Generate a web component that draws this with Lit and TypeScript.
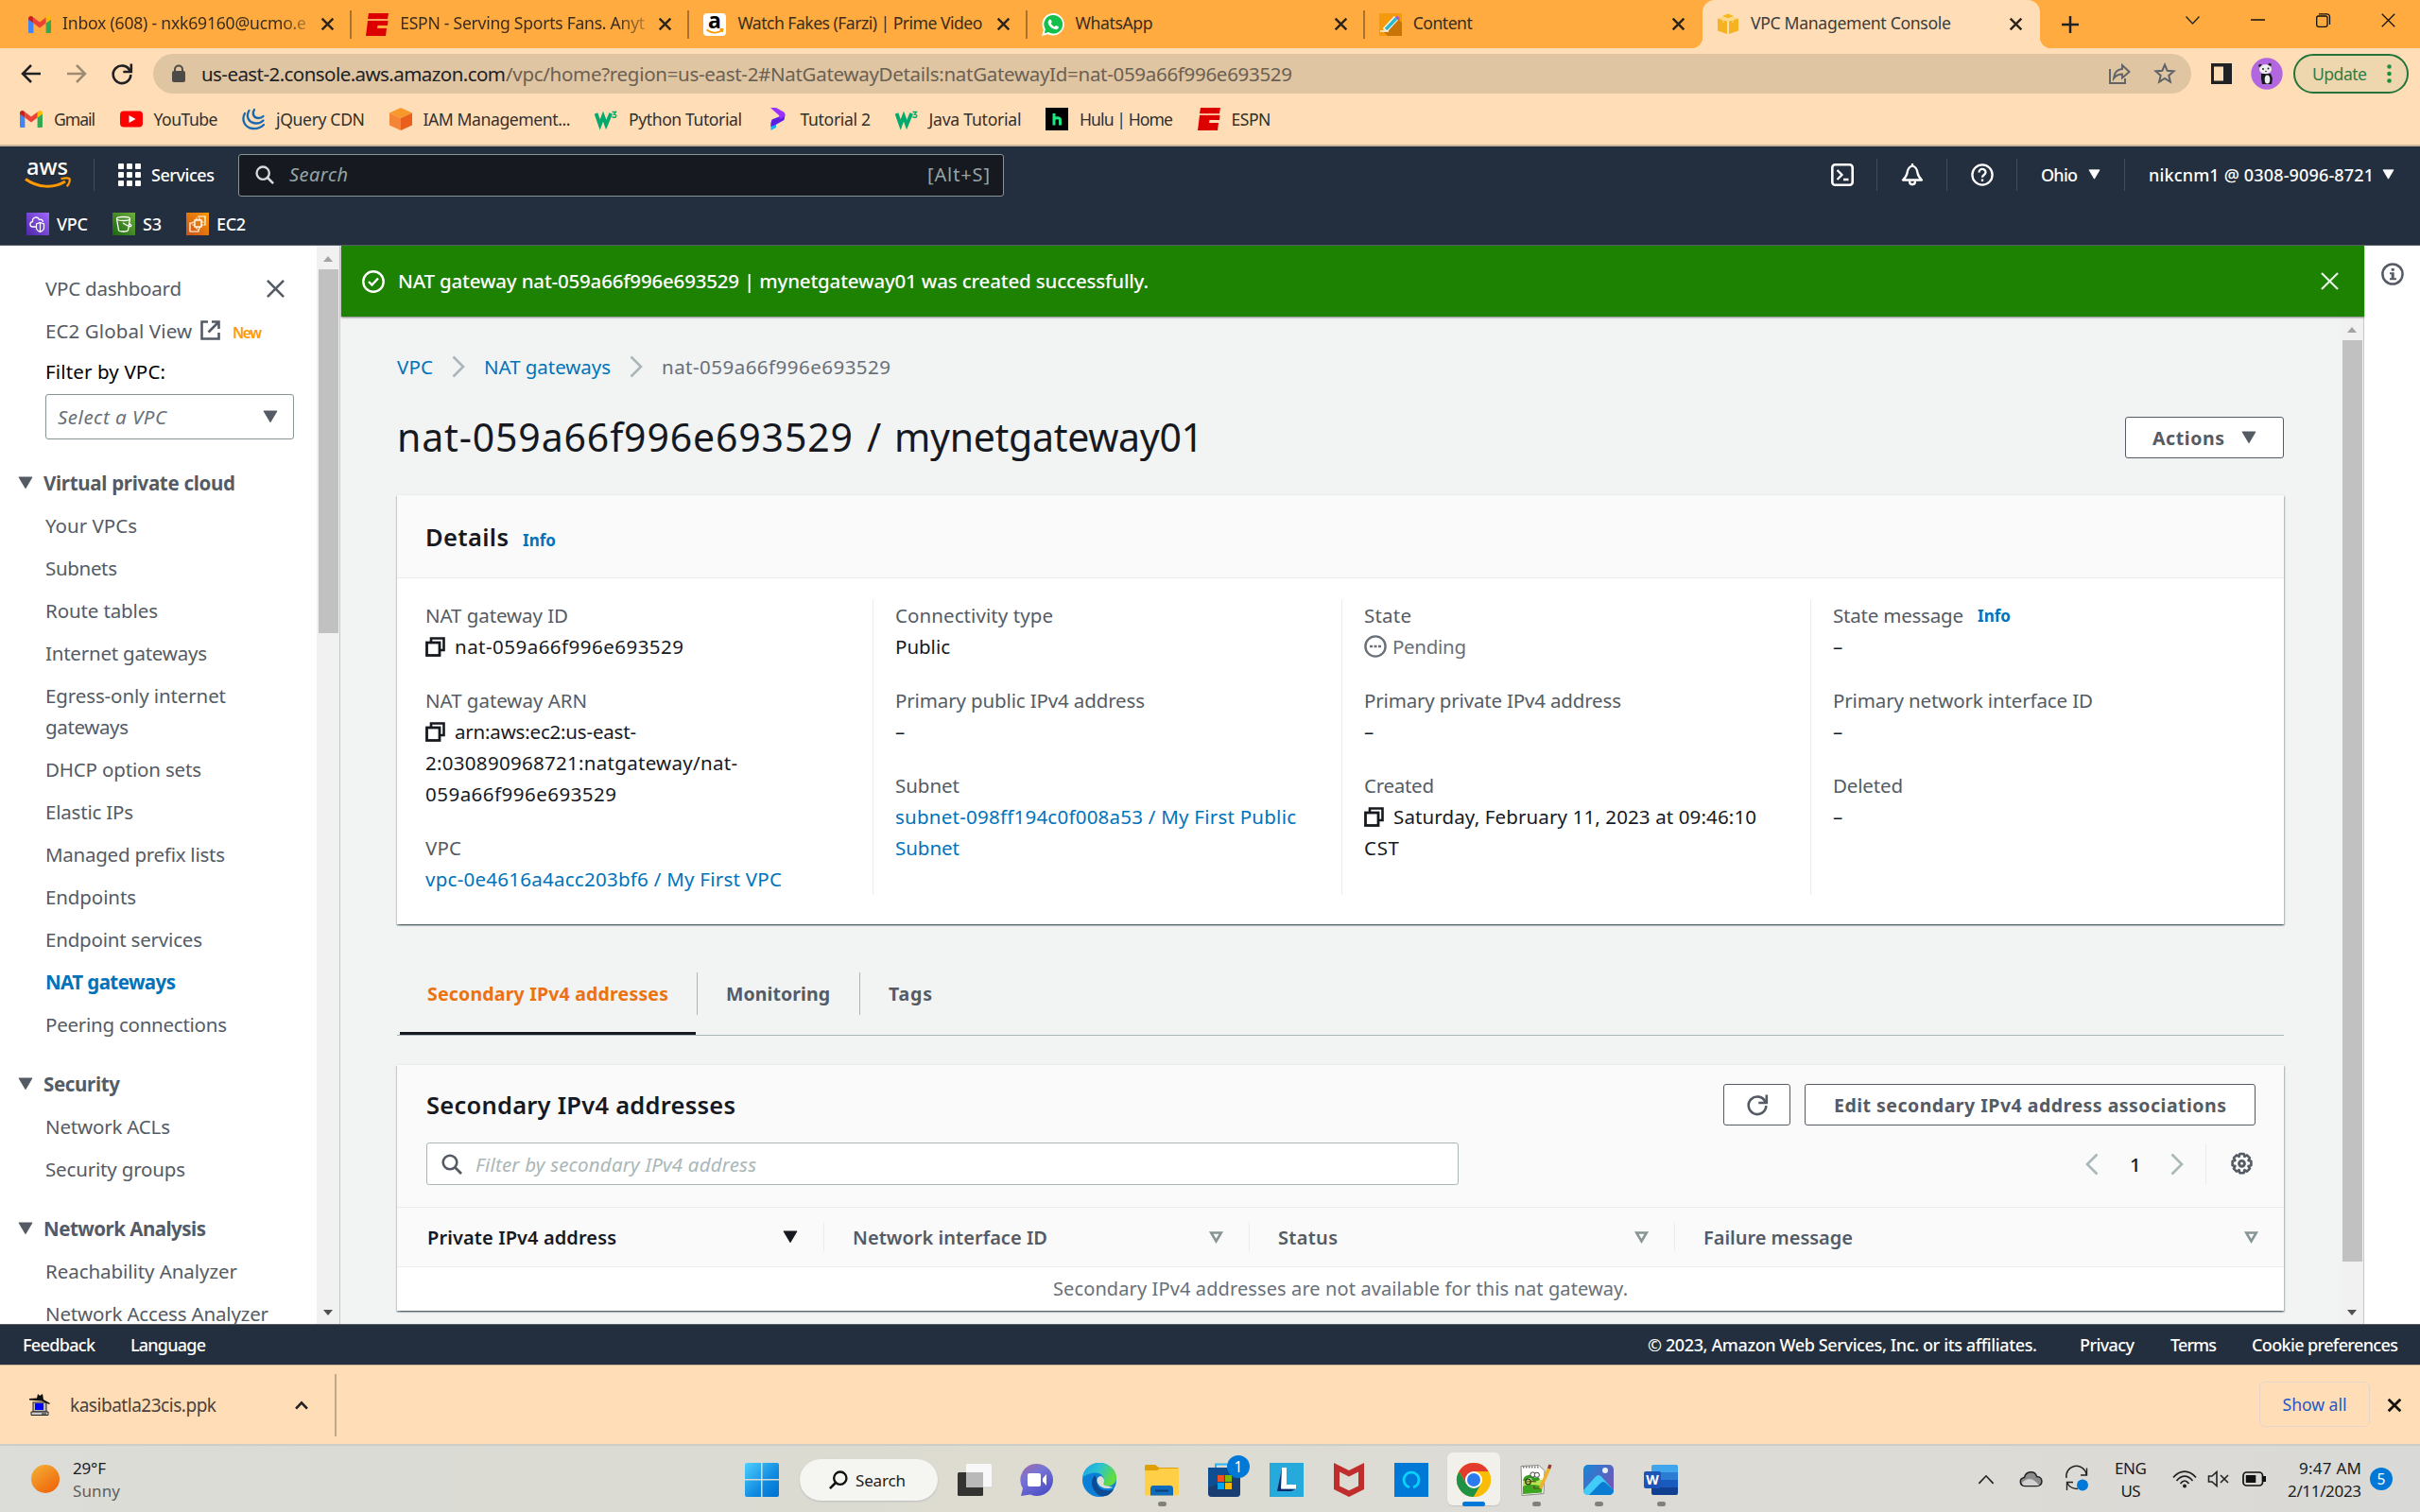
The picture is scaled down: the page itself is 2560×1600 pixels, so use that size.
import { LitElement, html, svg, css, nothing, TemplateResult } from "lit";
import { customElement } from "lit/decorators.js";

/* ---------- text fitted to a given advance width ---------- */
const fit = (text: string, w: number, cls = "") =>
  html`<span class="fit ${cls}" data-w=${w}>${text}</span>`;

/* ---------- icons ---------- */
const box = (w: number, h: number, vb: string, body: unknown, cls = "") =>
  html`<svg class="ic ${cls}" width=${w} height=${h} viewBox=${vb} fill="none">${body}</svg>`;

const gmail = () => box(24, 18, "0 0 24 18", svg`
  <path fill="#4285f4" d="M0 3v13.4c0 .9.7 1.6 1.6 1.6h3.8V7.6z"/>
  <path fill="#34a853" d="M18.6 18h3.8c.9 0 1.6-.7 1.6-1.6V3l-5.4 4.6z"/>
  <path fill="#fbbc04" d="M18.6 1.6v6L24 3.8V2.4c0-2-2.300-3.100-3.900-1.900z"/>
  <path fill="#ea4335" d="M5.400 7.600V1.600L12 6.500l6.600-4.900v6L12 12.500z"/>
  <path fill="#c5221f" d="M0 2.400v1.400l5.400 3.800v-6L3.900.5C2.300-.7 0 .4 0 2.400z"/>`);
const espn = () => box(24, 24, "0 0 24 24", svg`
  <path fill="#d00" d="M3 0h21l-1 6H2zM2 8h21.500L23 13h-10.500l-.5 3H22l-1 8H0z"/><path fill="#ff9a7a" d="M2 6.300h21v1.200H2z"/>`);
const amazonFav = () => box(24, 24, "0 0 24 24", svg`
  <rect width="24" height="24" rx="4" fill="#fff"/>
  <text x="12" y="15.500" text-anchor="middle" class="svgb" font-size="23" fill="#000">a</text>
  <path d="M3.500 17.500c5 4 12 4 16.500.5M17.500 17h3l-.6 3" stroke="#f90" stroke-width="1.800"/>`);
const whatsapp = () => box(24, 24, "0 0 24 24", svg`
  <path fill="#fff" d="M12.200 0a11.800 11.800 0 0 0-10.300 17.500L0 24l6.600-1.700A11.800 11.800 0 1 0 12.200 0z"/>
  <path fill="#12c04c" d="M12.200 2a9.800 9.800 0 0 0-8.300 15l-1.100 4.200 4.300-1.100A9.800 9.800 0 1 0 12.200 2z"/>
  <path fill="#fff" d="M8.500 6.500c.6-.2 1-.1 1.300.5l.9 2c.1.400 0 .7-.9 1.700.9 1.700 2.200 2.800 4 3.500.9-1.100 1.100-1.400 1.500-1.200l2.200 1c.5.300.5.600.2 1.400-.6 1.400-2.200 2-3.600 1.700-4-.9-7-4-7.400-7-.1-1.400.8-3.200 1.800-3.600z"/>`);
const pencil = () => box(24, 24, "0 0 24 24", svg`
  <rect width="24" height="24" fill="#f59a0c"/><path fill="#c97505" d="M5 20 20 6l4 4v14H9z"/>
  <path d="M1 19h9" stroke="#fff" stroke-width="1.300"/>
  <path d="M6 18 18 5" stroke="#fff" stroke-width="6"/><path d="M7 17 18 5.500" stroke="#2bb7c8" stroke-width="3.500"/>
  <path d="m17 4.500 2-2 3 3-2 2z" fill="#a35bd0"/><path d="m4 20 1-4 3 3z" fill="#fbe6b0"/>`);
const cube = () => box(24, 24, "0 0 24 24", svg`
  <path fill="#f8b91c" d="m6 3 6-2.500L18 3l-6 2.500z"/>
  <path fill="#f5b223" d="M1 5.500 11 8v14L1 18.500zM23 5.500 13 8v14l10-3.500z"/>
  <path fill="#fbd98a" d="m1 5.500 5-2 6 2.500 6-2.500 5 2L12 9z"/><path d="M7 7v3M17 7v3" stroke="#fbd98a"/>`);
const youtube = () => box(24, 24, "0 0 24 24", svg`
  <rect y="3.500" width="24" height="17" rx="4" fill="#f00"/><path fill="#fff" d="m9.500 8 7 4-7 4z"/>`);
const jquery = () => box(24, 24, "0 0 24 24", svg`<g stroke="#1669b0" stroke-width="2.300" stroke-linecap="round">
  <path d="M3 6c-4 7 0 15 8 16 5 .6 9-1 12-4"/><path d="M7.500 3c-4 7 0 13 7 13.500 3.500.2 6-1 8-3"/><path d="M13 2c-3 5 0 9 4.500 9 2 0 3.500-.6 5-2"/></g>`);
const iam = () => box(24, 24, "0 0 24 24", svg`
  <path fill="#f8982a" d="M12 0 24 5.500 12 11 0 5.500z"/><path fill="#f58536" d="M0 5.500 12 11v13L0 18.500z"/><path fill="#e8601c" d="M24 5.500 12 11v13l12-5.500z"/>`);
const w3 = () => box(24, 24, "0 0 24 24", svg`
  <path d="m1.500 6 4.200 12 3.300-9 3.200 9 5-12" stroke="#04aa6d" stroke-width="3.800"/>
  <path d="M18.500 4.500h4L20.500 7c3-.2 3 3.500 0 3.300-.9 0-1.600-.4-2-1" stroke="#04aa6d" stroke-width="1.400"/>`);
const pgeek = () => box(24, 24, "0 0 24 24", svg`
  <path fill="#17b0f5" d="M4.500 15.500 10 13v8l-5.500 3z"/><path fill="#5a1fe0" d="m4.500 16.500 1-4 9-3.500 5-2-1 6-9 5-5 2z"/><path fill="#9b30ff" d="M4 0h6l8 4.500c1.500 1 1.500 2.500 1.300 4.500L14 12l-1-4z"/>`);
const hulu = () => box(24, 24, "0 0 24 24", svg`<rect width="24" height="24" fill="#000"/>
  <path d="M9 6v12.500M9 13c0-3 6.500-3 6.500 0v5.500" stroke="#1ce783" stroke-width="3"/>`);

const x = (s: number, sw: number, col: string) =>
  box(s, s, "0 0 20 20", svg`<path d="M1 1 19 19M19 1 1 19" stroke=${col} stroke-width=${(sw * 20) / s}/>`);
const back = (fwd = false) => box(24, 24, "0 0 24 24",
  svg`<g transform=${fwd ? "matrix(-1 0 0 1 24 0)" : ""} stroke=${fwd ? "#9c8a73" : "#202124"} stroke-width="2.500"><path d="M22 12H3M12 3l-9 9 9 9"/></g>`);
const reload = (col: string, s = 24) => box(s, s, "0 0 24 24", svg`
  <path d="M20.500 9A9.300 9.300 0 1 0 21.300 13" stroke=${col} stroke-width="2.600"/><path d="M21.800 1.500V10h-8.500" stroke=${col} stroke-width="2.600"/>`);
const lock = () => box(16, 20, "0 0 16 20", svg`<rect x="1" y="7" width="14" height="12" rx="2" fill="#4d4b47"/><path d="M4 8V5.500a4 4 0 0 1 8 0V8" stroke="#4d4b47" stroke-width="2"/>`);
const shareIc = () => box(24, 24, "0 0 24 24", svg`<g stroke="#5f6368" stroke-width="1.900"><path d="M2 7v15h16v-5"/><path d="M15 3v4C9 7.500 6.500 11 6 17c2.500-3.500 5-4.500 9-4.500v4L22.500 10z"/></g>`);
const star = () => box(24, 24, "0 0 24 24", svg`<path d="m12 2.500 2.700 6.300 6.800.6-5.200 4.500 1.600 6.700L12 17l-5.900 3.600 1.600-6.700-5.200-4.500 6.800-.6z" stroke="#5f6368" stroke-width="2"/>`);
const panel = () => box(22, 22, "0 0 22 22", svg`<path fill="#202124" fill-rule="evenodd" d="M0 0h22v22H0zM3 3.500v15h10v-15z"/>`);
const panda = () => box(34, 34, "0 0 34 34", svg`<circle cx="17" cy="17" r="16.700" fill="#b266e0"/>
  <path d="M11 17h10l2 5-1 6H12l-1-6z" fill="#16191f"/><ellipse cx="17.500" cy="23" rx="2.800" ry="4.500" fill="#eee"/>
  <circle cx="10" cy="8.500" r="1.800" fill="#222"/><circle cx="20" cy="7.500" r="1.800" fill="#222"/>
  <ellipse cx="15.500" cy="12.300" rx="6.500" ry="5" fill="#eee"/><circle cx="13" cy="12" r="1" fill="#222"/><circle cx="18.500" cy="11.500" r="1" fill="#222"/><circle cx="16" cy="14.500" r=".8" fill="#222"/>`);
const tri = (col: string, w = 15) => box(w, w * 0.85, "0 0 15 13", svg`<path d="M1 1h13L7.500 12z" fill=${col} stroke=${col} stroke-linejoin="round"/>`);
const triO = () => box(15, 13, "0 0 15 13", svg`<path d="M2.200 1.500h10.600L7.500 10.500z" stroke="#879596" stroke-width="2.600" fill="#fafafa"/>`);
const search = (col: string, s = 22) => box(s, s, "0 0 22 22", svg`<circle cx="9" cy="9" r="7.300" stroke=${col} stroke-width="2.600"/><path d="m14 14 7 7" stroke=${col} stroke-width="2.800"/>`);
const waffle = () => box(24, 24, "0 0 24 24", svg`${[0, 9, 18].flatMap((a) => [0, 9, 18].map((b) => svg`<rect x=${a} y=${b} width="6" height="6" rx="1" fill="#fff"/>`))}`);
const shell = () => box(24, 24, "0 0 24 24", svg`<rect x="1.300" y="1.300" width="21.400" height="21.400" rx="3" stroke="#fff" stroke-width="2.600"/><path d="m6.500 7 5 5-5 5M13 17h5.500" stroke="#fff" stroke-width="2.300"/>`);
const bell = () => box(24, 24, "0 0 24 24", svg`<path d="M12 2.500c-4 1-5 4-5.500 7.500S4.500 15 2 17.500h20C19.500 15 18 13.500 17.500 10S16 3.500 12 2.500zM12 0v3" stroke="#fff" stroke-width="2.300" stroke-linejoin="round"/><path d="M9 18.500c0 5 6 5 6 0" stroke="#fff" stroke-width="2.300"/>`);
const help = () => box(24, 24, "0 0 24 24", svg`<circle cx="12" cy="12" r="10.600" stroke="#fff" stroke-width="2.300"/><path d="M8.500 9.500c0-5 7.200-4.500 7 0-.1 2.600-3.500 2.500-3.500 5.300M12 16.500v2.500" stroke="#fff" stroke-width="2.300"/>`);
const awsLogo = () => box(50, 32, "0 0 50 32", svg`
  <text x="2" y="16" class="svgm" font-size="24" textLength="44" lengthAdjust="spacingAndGlyphs" fill="#fff">aws</text>
  <path d="M1 20.500c13 9.500 30 10 42 2.500" stroke="#f90" stroke-width="3"/><path d="M38.500 20.300c3.500-1 7.500-1.200 9-.3.600 2-.4 5.500-2.800 8.300" stroke="#f90" stroke-width="2.200"/>`);
const svcVpc = () => box(24, 24, "0 0 24 24", svg`<rect width="24" height="24" fill="url(#gv)"/><defs><linearGradient id="gv" x1="0" y1="1" x2="1" y2="0"><stop stop-color="#4d27a8"/><stop offset="1" stop-color="#a166ff"/></linearGradient></defs>
  <path d="M10 15H7c-4 0-4-5-.5-5.500C6 4.500 12 3.500 13.500 7.500c2-1 4 .5 4 2.500" stroke="#fff" stroke-width="1.300"/><path d="M14.500 10.500 18.500 12v4.500c0 1.500-2 3-4 4-2-1-4-2.500-4-4V12zM14.500 10.500v10" stroke="#fff" stroke-width="1.200"/>`);
const svcS3 = () => box(24, 24, "0 0 24 24", svg`<rect width="24" height="24" fill="url(#gs)"/><defs><linearGradient id="gs" x1="0" y1="1" x2="1" y2="0"><stop stop-color="#1b660f"/><stop offset="1" stop-color="#6cae3e"/></linearGradient></defs>
  <ellipse cx="11.500" cy="6.500" rx="7" ry="2" stroke="#fff" stroke-width="1.300"/><path d="m4.500 6.500 2 12c.3 2 9.500 2 10 0l2-12M11 11c3 2 6 4 8.500 3.500 1-1.300-1-2.500-2-3" stroke="#fff" stroke-width="1.300"/>`);
const svcEc2 = () => box(24, 24, "0 0 24 24", svg`<rect width="24" height="24" fill="url(#ge)"/><defs><linearGradient id="ge" x1="0" y1="1" x2="1" y2="0"><stop stop-color="#c8511b"/><stop offset="1" stop-color="#f90"/></linearGradient></defs>
  <rect x="9" y="8" width="7" height="7" stroke="#fff" stroke-width="1.400"/><path d="M11 5.500V8m3-2.500V8m-3 7v2.500m3-2.500v2.500M6.500 10H9m-2.500 3H9m7-3h2.500M16 13h2.500M7 11H4v9h9v-3M13 5V4h7v9h-1" stroke="#fff" stroke-width="1.200"/>`);
const ext = () => box(21, 21, "0 0 21 21", svg`<path d="M8 1.500H1.500v18h18V13M12 1.500h7.500V9M19 2 8.500 12.500" stroke="#545b64" stroke-width="2.600"/>`);
const check = () => box(24, 24, "0 0 24 24", svg`<circle cx="12" cy="12" r="10.700" stroke="#fff" stroke-width="2.400"/><path d="m7 12 3.500 3.500L17 8.500" stroke="#fff" stroke-width="2.400"/>`);
const info = () => box(24, 24, "0 0 24 24", svg`<circle cx="12" cy="12" r="10.600" stroke="#545b64" stroke-width="2.500"/><path d="M10.700 6h3v2.700h-3zM9 10.300h4.700v6H16v2H9v-2h1.700v-4H9z" fill="#545b64"/>`);
const chev = (dir: "l" | "r") => box(14, 24, "0 0 14 24", svg`<path d=${dir === "r" ? "m1.500 1.500 10.500 10.500L1.500 22.500" : "M12.500 1.500 2 12l10.500 10.500"} stroke="#aab7b8" stroke-width="2.600"/>`);
const copy = () => box(21, 21, "0 0 21 21", svg`<path d="M6 5V1.500h13.500v12.500H16" stroke="#16191f" stroke-width="2.600"/><rect x="1.500" y="6" width="13.500" height="13.500" stroke="#16191f" stroke-width="2.800"/>`, "copy");
const pend = () => box(24, 24, "0 0 24 24", svg`<circle cx="12" cy="12" r="10.600" stroke="#687078" stroke-width="2.400"/><path d="M6 12h3m1.500 0h3m1.500 0h3" stroke="#687078" stroke-width="2.600"/>`, "pend");
const gear = () => box(25, 25, "0 0 24 24", svg`<path d="M10 1.500h4l.8 2.700 2.400-1.400 2.900 2.900-1.400 2.500 2.800.8v4.200l-2.800.8 1.400 2.500-2.900 2.900-2.400-1.400-.8 2.900h-4l-.8-2.900-2.500 1.400-2.900-2.900 1.400-2.500-2.700-.8v-4.200l2.700-.8-1.400-2.500 2.900-2.900 2.500 1.400z" stroke="#545b64" stroke-width="2.500" stroke-linejoin="round" transform="translate(0 .4)"/><circle cx="12" cy="11.800" r="2.800" stroke="#545b64" stroke-width="2.800"/>`, "gear");
const caretUp = (s: number, sw: number, col = "#202124") => box(s, s * 0.6, "0 0 20 12", svg`<path d="M1.500 11 10 2l8.500 9" stroke=${col} stroke-width=${(sw * 20) / s}/>`);
const putty = () => box(24, 24, "0 0 24 24", svg`<rect x="5" y="9" width="14" height="10" fill="#b9b9b9" stroke="#222"/><rect x="7" y="10" width="9" height="7" fill="#00f"/><path d="M3 19h18v3.500H3z" fill="#c9c9c9" stroke="#222"/><path d="m1 5 8-.5L10 0l2 2 3-2 1 6 7 4-1 1-8-3.500L1 6.500z" fill="#111"/><path d="M14 21h5" stroke="#111"/>`);

/* taskbar icons */
const win = () => box(36, 36, "0 0 36 36", svg`<defs><linearGradient id="gw" x1="0" y1="0" x2="1" y2="1" gradientUnits="userSpaceOnUse" gradientTransform="scale(36)"><stop stop-color="#4ed0ff"/><stop offset=".6" stop-color="#0f8ae0"/><stop offset="1" stop-color="#0070d0"/></linearGradient></defs>
  <path fill="url(#gw)" d="M2 0h15v17H0V2a2 2 0 0 1 2-2zM18.500 0H34a2 2 0 0 1 2 2v15H18.500zM0 18.500h17V36H2a2 2 0 0 1-2-2zM18.500 18.500H36V34a2 2 0 0 1-2 2H18.500z"/>`);
const taskview = () => box(36, 36, "0 0 36 36", svg`<rect y="10" width="27" height="25" rx="1.500" fill="#333331"/><rect x="9" y="1" width="27" height="25" rx="1.500" fill="#f8f8f8"/><path d="M9 10h18v16H9z" fill="#b9b9b9"/><path d="M27 26h9" stroke="#ccc"/>`);
const chat = () => box(36, 36, "0 0 36 36", svg`<defs><linearGradient id="gc" x1="0" y1="0" x2=".6" y2="1"><stop stop-color="#a5669f"/><stop offset=".4" stop-color="#7775d4"/><stop offset="1" stop-color="#5050c8"/></linearGradient></defs>
  <path fill="url(#gc)" d="M18 1a17 17 0 1 1-7 32.500L1 35l2-8A17 17 0 0 1 18 1z"/><rect x="8" y="11" width="14" height="14" rx="2" fill="#fff"/><path d="M24 16.500 28 12v12l-4-4.500z" fill="#fff"/>`);
const edge = () => box(36, 36, "0 0 36 36", svg`<defs><linearGradient id="e1" x1="0" y1="0" x2="1" y2=".4"><stop stop-color="#1ba0e8"/><stop offset=".5" stop-color="#2bc3d2"/><stop offset="1" stop-color="#62dd3c"/></linearGradient></defs>
  <circle cx="18" cy="18" r="18" fill="#0b7fd8"/><path fill="url(#e1)" d="M0 16C1 6 9 0 18 0c11 0 18 8 18 15.500 0 6-4.500 9-9 9-4 0-6-1.500-5-3 3-5-1-11-8-11C8 10.500 2 13 0 16z"/>
  <path fill="#0c4a94" d="M13.500 13c-6 5-4 15 3 20.500 6 3.500 13 1.500 16.500-5.500-11 4-19-2-17.500-9.500z"/><path fill="#dfdfd8" d="M20 14c-4 0-6 4-3.500 8 3 5 9.500 6 16 4l-5-1.500c-4 0-6-1.500-5-3 1.200-2.500.5-6-2.500-7.500zM33.500 27.500 36 23v6z"/>`);
const folder = () => box(36, 36, "0 0 36 36", svg`<path fill="#dea005" d="M0 4c0-1.500.8-2 2-2h9l4 3h19c1 0 2 .6 2 2v6H0z"/><path fill="#ffcf48" d="M0 8h13l3-2h20v27c0 1-.6 1.500-1.500 1.500h-33C.6 34.500 0 34 0 33z"/><path fill="#0f6cbd" d="M6 34.500V27c0-2 1.500-3 3-3h18c2 0 3 1.500 3 3v7.500z"/><path d="M11 29.500h14" stroke="#0a3f78" stroke-width="2"/>`);
const store = () => box(36, 36, "0 0 36 36", svg`<path d="M9 6V1.500h16V6" stroke="#2cb5f0" stroke-width="2"/><path fill="#0e4f94" d="M1 5h34v27a4 4 0 0 1-4 4H5a4 4 0 0 1-4-4z"/><path fill="#24335c" d="M1 26 35 14v18a4 4 0 0 1-4 4H5a4 4 0 0 1-4-4z" opacity=".6"/><path fill="#f25022" d="M11 13h7v7h-7z"/><path fill="#7fba00" d="M19 13h7v7h-7z"/><path fill="#00a4ef" d="M11 21h7v7h-7z"/><path fill="#ffb900" d="M19 21h7v7h-7z"/>`);
const elL = () => box(36, 36, "0 0 36 36", svg`<rect width="36" height="36" fill="#26aadb"/><path fill="#0b2a6b" d="m13 6-5 24h15l5-2.500H13z"/><path fill="#fff" d="M13 5h5v18h10v4.500H12z"/>`);
const mcafee = () => box(36, 36, "0 0 36 36", svg`<path fill="#c02d2d" fill-rule="evenodd" d="m2 0 16 8 16-8v28l-16 8-16-8zM8 9.500v15l10 4.700 10-4.700v-15l-10 5z"/>`);
const alexa = () => box(36, 36, "0 0 36 36", svg`<rect width="36" height="36" fill="#0078d7"/><path d="M16 25.800a8 8 0 1 1 4 0" stroke="#05d5ff" stroke-width="2.600"/>`);
const chrome = () => box(36, 36, "0 0 36 36", svg`<circle cx="18" cy="18" r="18" fill="#fbbc05"/><path fill="#e33b2e" d="M2.400 9A18 18 0 0 1 33.600 9H18l-7.500 13.500z"/><path fill="#1f9246" d="M2.400 9A18 18 0 0 0 18 36l7.800-13.500H10.200z"/><path fill="#fbbc05" d="M33.600 9A18 18 0 0 1 18 36l7.800-13.500L18 9z"/><circle cx="18" cy="18" r="9" fill="#fff"/><circle cx="18" cy="18" r="7" fill="#2b7bee"/>`);
const npp = () => box(36, 36, "0 0 36 36", svg`<path fill="#fdfdfb" stroke="#888" d="m2 3.500 19-1 6 6-1 24-23 2z"/><path fill="#b9e34f" d="M4 18h21l-.5 9H4z"/><path fill="#3da51f" d="M4 25c6-3 14-2 20.500 0l-.5 6.500L4 33z"/><path d="M6 19c0-5 8-6 9-2 3 1 5 0 6-1" stroke="#2f9e1a" stroke-width="3.500"/><circle cx="9.500" cy="20" r="2.800" stroke="#3a3a20" stroke-width="1.300"/><circle cx="14.500" cy="12.500" r="2.600" fill="#fff" stroke="#444"/><circle cx="18.800" cy="12.800" r="2.600" fill="#fff" stroke="#444"/><path d="M6 20c5 0 9-1 12 0M16 24v3h6" stroke="#5a4b1c" stroke-width="1.200"/><path d="m22.500 27 9.500-22" stroke="#f0b02c" stroke-width="3.400"/><path d="m31.500 6 1.500-4" stroke="#8a3a3a" stroke-width="3.400"/><path d="M4 4.500h18" stroke="#777" stroke-dasharray="1.500 1.500" stroke-width="2"/>`);
const photos = () => box(36, 36, "0 0 36 36", svg`<defs><linearGradient id="gp" x1="0" y1="0" x2="1" y2=".6"><stop stop-color="#1487d8"/><stop offset="1" stop-color="#7058b8"/></linearGradient></defs><rect x="2" y="2" width="32" height="32" rx="5" fill="url(#gp)"/><path fill="#41cdf7" d="M2 29 15 14.500c2-2 4-2 6 0L34 29c0 3-2 5-5 5H7c-3 0-5-2-5-5z"/><path fill="#0a7cd2" d="m8 34 12-12.500c2-2 4-2 6 0l8 7.500c0 3-2 5-5 5z"/><circle cx="25" cy="8" r="3" fill="#e8eefa"/>`);
const word = () => box(36, 36, "0 0 36 36", svg`<path fill="#41a5ee" d="M10 2h24a2 2 0 0 1 2 2v6H8V4c0-1 1-2 2-2z"/><path fill="#2b7cd3" d="M8 10h28v8H8z"/><path fill="#185abd" d="M8 18h28v8H8z"/><path fill="#103f91" d="M8 26h28v6a2 2 0 0 1-2 2H10a2 2 0 0 1-2-2z"/><rect y="9" width="18" height="18" rx="2" fill="#1d54b8"/><text x="9" y="23" text-anchor="middle" class="svgb" font-size="14" fill="#fff">W</text>`);
const sun = () => box(30, 30, "0 0 30 30", svg`<defs><linearGradient id="gu" x1="0" y1="0" x2=".7" y2="1"><stop stop-color="#f3b338"/><stop offset="1" stop-color="#f0660a"/></linearGradient></defs><circle cx="15" cy="15" r="15" fill="url(#gu)"/>`);
const cloud = () => box(26, 18, "0 0 26 18", svg`<path d="M6.500 16.500C0 16.500-.5 8.500 5.500 7.500 7 0 17 0 18.500 6.500c7 0 7.500 10 0 10z" fill="#8b8b8b" stroke="#222" stroke-width="1.500"/><path d="M3 13c7-7 13-4 18 3H6c-2 0-3-1-3-3z" fill="#d2d2d2"/>`);
const sync = () => box(26, 26, "0 0 26 26", svg`<path d="M2 12A10.500 10.500 0 0 1 23 8M23.500 1.500V9H17M14 23.500c-5 0-9-2-11-6M9 16.500H2.500V25" stroke="#222" stroke-width="1.400"/><circle cx="19" cy="19.500" r="6" fill="#0078d7"/>`);
const wifi = () => box(26, 20, "0 0 26 20", svg`<g stroke="#222" stroke-width="1.700"><path d="M1 8.500C8 0 18 0 25 8.500M4.500 12C9.500 5.500 16.500 5.500 21.500 12M8.500 15c3-4 6-4 9 0"/></g><circle cx="13" cy="17.500" r="2" fill="#222"/>`);
const mute = () => box(24, 18, "0 0 24 18", svg`<path d="M1.500 6H5l5-4.500v15L5 12H1.500zM14 5l8 8M22 5l-8 8" stroke="#222" stroke-width="1.600"/>`);
const batt = () => box(26, 16, "0 0 26 16", svg`<rect x="1" y="1" width="20.500" height="14" rx="3.500" stroke="#111" stroke-width="1.700"/><rect x="3.800" y="4" width="10.500" height="8" fill="#111"/><path d="M22 5h3v6h-3" fill="#111"/>`);

/* ---------- data ---------- */
type Tab = [() => TemplateResult, string, number, boolean?];
const TABS: Tab[] = [
  [gmail, "Inbox (608) - nxk69160@ucmo.e", 258],
  [espn, "ESPN - Serving Sports Fans. Anyt", 259],
  [amazonFav, "Watch Fakes (Farzi) | Prime Video", 259],
  [whatsapp, "WhatsApp", 82],
  [pencil, "Content", 63],
  [cube, "VPC Management Console", 212, true],
];
const MARKS: [() => TemplateResult, string, number][] = [
  [gmail, "Gmail", 44], [youtube, "YouTube", 68], [jquery, "jQuery CDN", 94], [iam, "IAM Management...", 156],
  [w3, "Python Tutorial", 120], [pgeek, "Tutorial 2", 74.500], [w3, "Java Tutorial", 98], [hulu, "Hulu | Home", 99], [espn, "ESPN", 42],
];
const NAV: { title: string; w: number; items: [string, number][] }[] = [
  { title: "Virtual private cloud", w: 203, items: [
    ["Your VPCs", 97], ["Subnets", 76], ["Route tables", 119], ["Internet gateways", 171], ["Egress-only internet|gateways", 191],
    ["DHCP option sets", 165], ["Elastic IPs", 93], ["Managed prefix lists", 190], ["Endpoints", 96], ["Endpoint services", 166],
    ["NAT gateways", 138], ["Peering connections", 192]] },
  { title: "Security", w: 81, items: [["Network ACLs", 132], ["Security groups", 148]] },
  { title: "Network Analysis", w: 172, items: [["Reachability Analyzer", 203], ["Network Access Analyzer", 236]] },
];
const dash = () => fit("–", 11);

@customElement("app-root")
export class AppRoot extends LitElement {
  static styles = css`
    :host { display: block; width: 2560px; height: 1600px; overflow: hidden; font-family: "Noto Sans", "Open Sans", sans-serif; font-size: 20.5px; color: #16191f; }
    * { box-sizing: border-box; }
    .ic { display: block; flex: none; overflow: visible; }
    .fit { display: inline-block; white-space: pre; flex: none; }
    .svgb { font-family: "Noto Sans", sans-serif; font-weight: 700; }
    .svgm { font-family: "Noto Sans", sans-serif; font-weight: 500; }
    .row { display: flex; align-items: center; }
    .grow { flex: 1; min-width: 0; }

    .strip { height: 51px; background: #ffab40; padding-left: 15px; font-size: 17.6px; color: #3b2c1c; }
    .tab { height: 51px; width: 357.2px; flex: none; padding: 0 17px 0 15px; gap: 12px; border-right: 2px solid transparent; position: relative; }
    .tab .lbl { height: 28px; }
    .tab.cut .lbl { -webkit-mask-image: linear-gradient(90deg, #000 88%, rgba(0,0,0,.25)); mask-image: linear-gradient(90deg, #000 88%, rgba(0,0,0,.25)); }
    .tab:not(.on):not(.last)::after { content: ""; position: absolute; right: -2px; top: 11px; height: 30px; width: 2px; background: #a8732f; }
    .tab.on { background: #ffdeb7; border-radius: 13px 13px 0 0; color: #3c3c3c; }
    .tab.on::before, .tab.on::after { content: ""; position: absolute; bottom: 0; width: 12px; height: 12px; }
    .tab.on::before { left: -12px; background: radial-gradient(circle at 0 0, transparent 12px, #ffdeb7 12.5px); }
    .tab.on::after { right: -14px; background: radial-gradient(circle at 100% 0, transparent 12px, #ffdeb7 12.5px); }
    .plus { margin-left: 22.5px; }
    .wctl { gap: 54px; padding: 0 26px 9px 0; height: 51px; }

    .bar { height: 54px; background: #ffdeb7; padding: 0 12px 0 21px; color: #202124; }
    .bar .nav { gap: 24px; }
    .omni { height: 42px; width: 2156px; margin-left: 21px; border-radius: 21px; background: #dfc5a2; padding: 0 16px 0 19px; }
    .omni .host { margin-left: 16px; }
    .omni .path { color: #6b6052; }
    .omni .ic + .ic { margin-left: 24px; }
    .upd { width: 122px; height: 42px; border: 2px solid #23733a; border-radius: 21px; background: #eed7ae; color: #2f7d43; font-size: 17.6px; margin-left: 11px; padding: 0 16px 0 18px; justify-content: space-between; }
    .marks { height: 48px; background: #ffdeb7; padding: 0 0 7px 21px; gap: 25.500px; font-size: 17.6px; color: #33302b; }
    .mark { gap: 12px; }
    .hl { height: 2px; background: #c8b396; }

    .aws { height: 105px; background: #232f3e; color: #fff; font-size: 18px; font-weight: 500; border-bottom: 1px solid #545b64; }
    .aws1 { height: 60px; padding-left: 26px; }
    .aws1 .fit { margin-top: -1px; }
    .sep { width: 1px; height: 34px; background: #414d5c; flex: none; }
    .sbox { width: 810px; height: 45px; margin-left: 25px; border: 1.500px solid #879596; border-radius: 3px; background: #16191f; color: #95a5a6; padding: 0 14px 0 17px; font-size: 20px; font-weight: 400; }
    .it { font-style: italic; }
    .tools { gap: 24.500px; }
    .favs { height: 40px; padding: 0 0 0 28px; align-items: center; margin-top: 2px; }
    .favs .fit { margin-top: -1px; }

    .main { height: 1141px; display: flex; background: #f2f3f3; overflow: hidden; border-top: 0; }
    .side { width: 335px; background: #fff; color: #545b64; padding: 28px 0 0 48px; overflow: hidden; flex: none; }
    .ln { height: 33px; display: flex; align-items: center; flex: none; }
    .side .close { margin-left: auto; margin-right: 34px; padding-top: 2px; }
    .new { color: #ff9900; font-size: 15.500px; font-weight: 600; margin-left: 13px; padding-top: 4px; }
    .blk { color: #000; }
    .sel { width: 263px; height: 48px; margin: 8px 0 29px 0; border: 1.500px solid #879596; border-radius: 3px; padding: 0 16px 0 12px; justify-content: space-between; color: #687078; }
    .ghead { margin: 0 0 12.5px -29px; gap: 11px; font-weight: 700; }
    .li { margin-bottom: 12px; }
    .grp { margin-bottom: 29.5px; }
    .act { color: #0073bb; font-weight: 700; }
    .sb { width: 25px; background: #f1f1f1; flex: none; display: flex; flex-direction: column; align-items: center; border-right: 1px solid #c6c8c8; }
    .sb .up, .sb .dn { height: 25px; width: 24px; display: flex; align-items: center; justify-content: center; }
    .sb .up { padding-top: 3px; }
    .sb .up::before { content: ""; border: 5.500px solid transparent; border-top: 0; border-bottom: 6px solid #a3a3a3; }
    .sb .dn::before { content: ""; border: 5.500px solid transparent; border-bottom: 0; border-top: 6px solid #505050; }
    .thumb { width: 21px; background: #c1c1c1; }
    .thumb.a { height: 385px; } .thumb.b { height: 975px; }
    .cwrap { width: 2140px; display: flex; flex-direction: column; flex: none; margin-left: 1px; }
    .flash { height: 75px; background: #1d8102; color: #fff; padding: 0 27px 0 22px; font-weight: 500; box-shadow: 0 1px 2px rgba(0,0,0,.5); z-index: 1; flex: none; position: relative; }
    .flash .fit { margin: -1px 0 0 14px; }
    .cbody { flex: 1; display: flex; min-height: 0; }
    .content { flex: 1; padding: 36px 60px 0 59px; overflow: hidden; }
    .crumb { height: 33px; color: #687078; gap: 20px; }
    .lk { color: #0073bb; }
    .h1 { height: 44px; margin: 37px 0 38px; font-size: 41px; }
    .h1 .sl { margin: 0 14px 0 15px; }
    .h1 .fit { margin-top: -2px; }
    .btn .fit { margin-top: 0; }
    .btn { height: 44px; border: 1.500px solid #545b64; border-radius: 3px; background: #fff; color: #545b64; font-weight: 700; font-size: 19.5px; display: flex; align-items: center; justify-content: center; flex: none; }
    .card { background: #fff; border-top: 1px solid #eaeded; box-shadow: 0 1.500px 1.500px rgba(0,28,36,.5), 1.500px 1.500px 1.500px rgba(0,28,36,.15), -1.500px 1.500px 1.500px rgba(0,28,36,.15); }
    .chead { height: 88px; background: #fafafa; border-bottom: 1.500px solid #eaeded; padding: 2px 0 0 30px; font-size: 25.5px; font-weight: 600; }
    .chead .fit { margin-top: -2px; }
    .inf { color: #0073bb; font-weight: 700; font-size: 17px; margin-left: 15px; padding-top: 5px; }
    .k .inf { padding-top: 2px; }
    .cols { display: flex; padding: 22px 0 30px 30px; height: 366px; }
    .col { width: 496px; flex: none; }
    .col + .col { border-left: 1px solid #eaeded; padding-left: 23px; height: 312px; margin-top: 1px; }
    .col + .col .kv:first-child { margin-top: -1px; }
    .col:first-child { width: 473px; }
    .kv { margin-bottom: 24px; }
    .k { color: #545b64; }
    .copy { margin: 1px 10px 0 0; }
    .pend { margin-right: 6px; }
    .mut { color: #687078; }
    .tabs { display: flex; height: 88px; margin-top: 30px; border-bottom: 1.500px solid #aab7b8; font-weight: 700; font-size: 19.5px; color: #545b64; }
    .t { display: flex; align-items: center; position: relative; padding: 0 31px; }
    .t + .t { padding-left: 31px; }
    .t + .t::before { content: ""; position: absolute; left: 0; top: 21px; height: 45px; width: 1px; background: #aab7b8; }
    .t.sel1 { color: #ec7211; width: 317px; padding-left: 32px; }
    .t.sel1::after { content: ""; position: absolute; left: 3px; right: 1px; bottom: 0; height: 3px; background: #16191f; }
    .c2 { margin-top: 30px; height: 261px; }
    .c2h { background: #fafafa; height: 151px; padding: 20px 30px 0; border-bottom: 1.500px solid #eaeded; }
    .c2t { height: 44px; font-size: 25.5px; font-weight: 600; gap: 15px; padding-left: 1px; }
    .c2f { height: 45px; margin-top: 18px; padding-left: 1px; }
    .fin { width: 1092px; height: 45px; border: 1.500px solid #aab7b8; border-radius: 3px; background: #fff; color: #aab7b8; padding: 0 15px; gap: 14px; }
    .one { margin: 0 33px; font-weight: 500; }
    .vs { width: 1px; height: 44px; background: #eaeded; margin: 0 25px 0 23px; }
    .gear { margin-right: 2px; }
    .th { height: 63px; background: #fafafa; border-bottom: 1.500px solid #eaeded; display: flex; font-weight: 600; font-size: 20px; color: #545b64; padding-left: 1px; }
    .thc { width: 450px; display: flex; align-items: center; justify-content: space-between; padding: 0 27px 0 31px; position: relative; flex: none; }
    .thc:last-child { flex: 1; }
    .thc + .thc::before { content: ""; position: absolute; left: 0; top: 15px; height: 31px; width: 1px; background: #eaeded; }
    .dark { color: #16191f; }
    .empty { height: 45px; display: flex; justify-content: center; align-items: center; color: #687078; font-size: 20px; }
    .right { flex: 1; background: #fff; display: flex; justify-content: flex-end; padding: 18px 17px 0 0; }

    .foot { height: 43px; background: #232f3e; border-top: 1.500px solid #545b64; color: #fff; font-size: 18px; font-weight: 500; padding: 0 23px 0 24px; }
    .dl { height: 84px; background: #ffdeb7; border-top: 1px solid #c8b396; color: #4a4139; font-size: 19px; padding: 1px 20px 0 30px; }
    .dsep { width: 2px; height: 66px; background: #c0a88c; margin-left: 28px; }
    .show { width: 117px; height: 48px; border: 1.500px solid #e3d5c9; border-radius: 6px; display: flex; align-items: center; justify-content: center; color: #2158c8; font-size: 17.6px; margin-right: 19px; margin-top: -2px; }
    .task { height: 72px; background: linear-gradient(90deg, #dcdcd8, #dbdbd3 30%, #dedcd0 42%, #dcdbd5 60%, #dddbd5 80%, #d9d9d7); border-top: 2px solid #cdcdc7; color: #1c1c1c; font-size: 17px; padding-left: 33px; }
    .wx { margin-left: 14px; width: 60px; flex: none; }
    .two { display: flex; flex-direction: column; align-items: flex-start; padding-top: 1px; }
    .two .fit { line-height: 24px; }
    .g { color: #5e5e5c; }
    .cell { width: 66px; height: 70px; flex: none; display: flex; align-items: center; justify-content: center; position: relative; padding-top: 0; }
    .cell .ic { margin-top: 2px; z-index: 1; }
    .cell.act2::before { content: ""; position: absolute; left: 5px; top: 7px; width: 56px; height: 56px; border-radius: 6px; background: #f1f0eb; box-shadow: 0 1px 1px #c4c4c0; }
    .cell.run::after { content: ""; position: absolute; bottom: 6px; width: 9px; height: 5px; border-radius: 3px; background: #80807c; }
    .cell.act2::after { content: ""; position: absolute; bottom: 6px; width: 24px; height: 5px; border-radius: 3px; background: #0078d7; }
    .bdg { background: #0078d7; color: #fff; width: 24px; height: 24px; border-radius: 50%; display: flex; align-items: center; justify-content: center; font-size: 15.500px; flex: none; }
    .cell .bdg { position: absolute; right: 6px; top: 10px; z-index: 2; }
    .pill { width: 146px; height: 44px; border-radius: 22px; background: #f5f5f1; box-shadow: 0 1px 2px #bbb; padding-left: 31px; margin: 2px 6px 0 7.500px; gap: 8px; flex: none; }
    .flip { transform: scaleX(-1); display: block; }
    .two.end { align-items: flex-end; } .two.mid { align-items: center; }
  `;

  protected updated() {
    this.renderRoot.querySelectorAll<HTMLElement>(".fit").forEach((el) => {
      const target = Number(el.dataset.w);
      const n = (el.textContent ?? "").length;
      el.style.letterSpacing = "0";
      el.style.width = "auto";
      const natural = el.getBoundingClientRect().width;
      if (n > 1) el.style.letterSpacing = `${(target - natural) / (n - 1)}px`;
      el.style.width = `${target}px`;
    });
  }

  private kv(label: unknown, lines: unknown[]) {
    return html`<div class="kv"><div class="ln k">${label}</div>${lines.map((l) => html`<div class="ln">${l}</div>`)}</div>`;
  }

  private browser() {
    return html`
      <div class="strip row">
        ${TABS.map(([icon, label, w, on], i) => html`
          <div class="tab row ${on ? "on" : ""} ${i < 2 ? "cut" : ""} ${i === 4 ? "last" : ""}">${icon()}
            <div class="grow lbl">${fit(label, w)}</div>${x(13, 2.4, "#2b231a")}</div>`)}
        <span class="plus">${box(18, 18, "0 0 18 18", svg`<path d="M9 0v18M0 9h18" stroke="#202124" stroke-width="2.500"/>`)}</span>
        <span class="grow"></span>
        <div class="wctl row">
          ${box(15, 9, "0 0 15 9", svg`<path d="m.5.500 7 7.500 7-7.500" stroke="#222" stroke-width="1.300"/>`)}
          ${box(15, 2, "0 0 15 2", svg`<path d="M0 1h15" stroke="#111" stroke-width="1.500"/>`)}
          ${box(15, 15, "0 0 15 15", svg`<rect x=".7" y="3" width="11.300" height="11.300" rx="2" stroke="#111" stroke-width="1.300"/><path d="M3 .8h8.500a3 3 0 0 1 3 3V12" stroke="#111" stroke-width="1.300"/>`)}
          ${x(15, 1.3, "#111")}
        </div>
      </div>
      <div class="bar row">
        <div class="nav row">${back()}${back(true)}${reload("#202124")}</div>
        <div class="omni row">${lock()}<span class="host">${fit("us-east-2.console.aws.amazon.com", 322)}</span>${fit("/vpc/home?region=us-east-2#NatGatewayDetails:natGatewayId=nat-059a66f996e693529", 832, "path")}
          <span class="grow"></span>${shareIc()}${star()}</div>
        <span class="grow"></span>${panel()}<span class="grow"></span>${panda()}
        <div class="upd row">${fit("Update", 58)}${box(5, 20, "0 0 5 20", svg`<circle cx="2.500" cy="2.500" r="2.300" fill="#1e8e3e"/><circle cx="2.500" cy="10" r="2.300" fill="#1e8e3e"/><circle cx="2.500" cy="17.500" r="2.300" fill="#1e8e3e"/>`)}</div>
      </div>
      <div class="marks row">${MARKS.map(([icon, label, w]) => html`<div class="mark row">${icon()}${fit(label, w)}</div>`)}</div>
      <div class="hl"></div>`;
  }

  private awsNav() {
    const gap = (w: number) => html`<span style="width:${w}px"></span>`;
    return html`<div class="aws">
      <div class="aws1 row">${awsLogo()}${gap(23)}<span class="sep"></span>${gap(25)}${waffle()}${gap(11)}${fit("Services", 67)}
        <div class="sbox row">${search("#d5dbdb", 20)}${gap(16)}${fit("Search", 62, "it")}<span class="grow"></span>${fit("[Alt+S]", 66)}</div>
        <span class="grow"></span>
        <div class="tools row">${shell()}<span class="sep"></span>${bell()}<span class="sep"></span>${help()}<span class="sep"></span></div>
        ${gap(25)}${fit("Ohio", 39)}${gap(11)}${tri("#fff", 13)}${gap(25)}<span class="sep"></span>${gap(25)}${fit("nikcnm1 @ 0308-9096-8721", 238)}${gap(9)}${tri("#fff", 13)}${gap(27)}
      </div>
      <div class="favs row">${svcVpc()}${gap(8)}${fit("VPC", 33)}${gap(26)}${svcS3()}${gap(8)}${fit("S3", 20)}${gap(26)}${svcEc2()}${gap(8)}${fit("EC2", 31)}</div>
    </div>`;
  }

  private sidebar() {
    return html`<div class="side">
      <div class="ln">${fit("VPC dashboard", 144)}<span class="close">${x(19, 2.6, "#545b64")}</span></div>
      <div class="ln" style="margin-top:12px">${fit("EC2 Global View", 155)}<span style="width:9px"></span>${ext()}<span class="new">${fit("New", 31)}</span></div>
      <div class="ln blk" style="margin-top:10px">${fit("Filter by VPC:", 127)}</div>
      <div class="sel row">${fit("Select a VPC", 115, "it")}${tri("#545b64", 16)}</div>
      ${NAV.map((g) => html`<div class="grp">
        <div class="ln ghead">${tri("#545b64", 16)}${fit(g.title, g.w)}</div>
        ${g.items.map(([t, w]) => {
          const [a, b] = t.split("|");
          return html`<div class="li ${a === "NAT gateways" ? "act" : ""}"><div class="ln">${fit(a, w)}</div>${b ? html`<div class="ln">${fit(b, 88)}</div>` : nothing}</div>`;
        })}
      </div>`)}
    </div>
    <div class="sb"><span class="up"></span><span class="thumb a"></span><span class="grow"></span><span class="dn"></span></div>`;
  }

  private content() {
    return html`<div class="cwrap">
      <div class="flash row">${check()}${fit("NAT gateway nat-059a66f996e693529 | mynetgateway01 was created successfully.", 794)}<span class="grow"></span>${x(19, 2.2, "#e8efe6")}</div>
      <div class="cbody">
        <div class="content">
          <div class="crumb row">${fit("VPC", 38, "lk")}${chev("r")}${fit("NAT gateways", 134, "lk")}${chev("r")}${fit("nat-059a66f996e693529", 242)}</div>
          <div class="h1 row">${fit("nat-059a66f996e693529", 482)}${fit("/", 15, "sl")}${fit("mynetgateway01", 327)}<span class="grow"></span>
            <div class="btn" style="width:168px">${fit("Actions", 76)}<span style="width:18px"></span>${tri("#545b64", 16)}</div></div>
          <div class="card">
            <div class="chead row">${fit("Details", 88)}<span class="inf">${fit("Info", 35)}</span></div>
            <div class="cols">
              <div class="col">
                ${this.kv(fit("NAT gateway ID", 151), [html`${copy()}${fit("nat-059a66f996e693529", 242)}`])}
                ${this.kv(fit("NAT gateway ARN", 171), [html`${copy()}${fit("arn:aws:ec2:us-east-", 192)}`, fit("2:030890968721:natgateway/nat-", 330), fit("059a66f996e693529", 202)])}
                ${this.kv(fit("VPC", 38), [fit("vpc-0e4616a4acc203bf6 / My First VPC", 377, "lk")])}
              </div>
              <div class="col">
                ${this.kv(fit("Connectivity type", 167), [fit("Public", 58)])}
                ${this.kv(fit("Primary public IPv4 address", 264), [dash()])}
                ${this.kv(fit("Subnet", 68), [fit("subnet-098ff194c0f008a53 / My First Public", 424, "lk"), fit("Subnet", 68, "lk")])}
              </div>
              <div class="col">
                ${this.kv(fit("State", 50), [html`${pend()}${fit("Pending", 78, "mut")}`])}
                ${this.kv(fit("Primary private IPv4 address", 272), [dash()])}
                ${this.kv(fit("Created", 74), [html`${copy()}${fit("Saturday, February 11, 2023 at 09:46:10", 384)}`, fit("CST", 37)])}
              </div>
              <div class="col">
                ${this.kv(html`${fit("State message", 138)}<span class="inf">${fit("Info", 35)}</span>`, [dash()])}
                ${this.kv(fit("Primary network interface ID", 275), [dash()])}
                ${this.kv(fit("Deleted", 74), [dash()])}
              </div>
            </div>
          </div>
          <div class="tabs">
            <div class="t sel1">${fit("Secondary IPv4 addresses", 255)}</div><div class="t">${fit("Monitoring", 110)}</div><div class="t">${fit("Tags", 46)}</div>
          </div>
          <div class="card c2">
            <div class="c2h">
              <div class="c2t row">${fit("Secondary IPv4 addresses", 327)}<span class="grow"></span>
                <div class="btn" style="width:71px">${reload("#545b64")}</div>
                <div class="btn" style="width:477px">${fit("Edit secondary IPv4 address associations", 415)}</div></div>
              <div class="c2f row"><div class="fin row">${search("#545b64")}${fit("Filter by secondary IPv4 address", 297, "it")}</div><span class="grow"></span>
                ${chev("l")}<span class="one">${fit("1", 10)}</span>${chev("r")}<span class="vs"></span>${gear()}</div>
            </div>
            <div class="th">
              <div class="thc dark">${fit("Private IPv4 address", 200)}${tri("#16191f", 16)}</div>
              <div class="thc">${fit("Network interface ID", 206)}${triO()}</div>
              <div class="thc">${fit("Status", 63)}${triO()}</div>
              <div class="thc">${fit("Failure message", 158)}${triO()}</div>
            </div>
            <div class="empty">${fit("Secondary IPv4 addresses are not available for this nat gateway.", 608)}</div>
          </div>
        </div>
        <div class="sb"><span class="up"></span><span class="thumb b"></span><span class="grow"></span><span class="dn"></span></div>
      </div>
    </div>
    <div class="right">${info()}</div>`;
  }

  private bottom() {
    const gap = (w: number) => html`<span style="width:${w}px"></span>`;
    const cells: [() => TemplateResult, string][] = [[taskview, ""], [chat, ""], [edge, ""], [folder, "run"], [store, "n"], [elL, ""], [mcafee, ""], [alexa, ""], [chrome, "act2"], [npp, "run"], [photos, "run"], [word, "run"]];
    return html`
      <div class="foot row">${fit("Feedback", 77)}${gap(37)}${fit("Language", 80)}<span class="grow"></span>
        ${fit("© 2023, Amazon Web Services, Inc. or its affiliates.", 412)}${gap(45)}${fit("Privacy", 58)}${gap(38)}${fit("Terms", 49)}${gap(37)}${fit("Cookie preferences", 155)}</div>
      <div class="dl row">${putty()}${gap(20)}${fit("kasibatla23cis.ppk", 155)}${gap(83)}${caretUp(14, 2.6)}<span class="dsep"></span><span class="grow"></span>
        <div class="show">${fit("Show all", 68)}</div>${x(14, 2.8, "#16120e")}</div>
      <div class="task row">${sun()}<div class="wx two">${fit("29°F", 35)}${fit("Sunny", 50, "g")}</div>
        ${gap(635.5)}<div class="cell">${win()}</div>
        <div class="pill row"><span class="flip">${search("#111", 20)}</span>${fit("Search", 53)}</div>
        ${cells.map(([ic, c]) => html`<div class="cell ${c}">${ic()}${c === "n" ? html`<span class="bdg">1</span>` : nothing}</div>`)}
        ${gap(302)}${caretUp(18, 1.6)}${gap(26)}${cloud()}${gap(22)}${sync()}${gap(27)}
        <div class="two mid">${fit("ENG", 34)}${fit("US", 21)}</div>${gap(27)}${wifi()}${gap(11)}${mute()}${gap(13)}${batt()}${gap(22)}
        <div class="two end">${fit("9:47 AM", 66)}${fit("2/11/2023", 78)}</div>${gap(9)}<span class="bdg">5</span>
      </div>`;
  }

  render() {
    return html`${this.browser()}${this.awsNav()}
      <div class="main">${this.sidebar()}${this.content()}</div>
      ${this.bottom()}`;
  }
}
